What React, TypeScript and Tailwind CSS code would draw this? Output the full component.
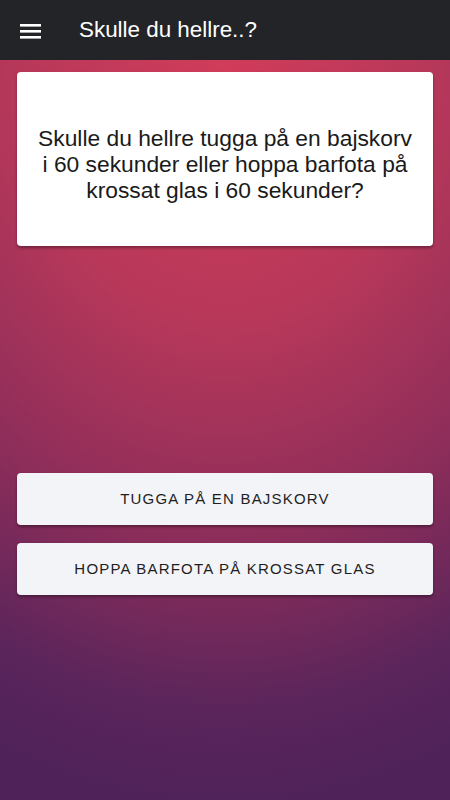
const choices = ["Tugga på en bajskorv", "Hoppa barfota på krossat glas"];

function MenuIcon() {
  return (
    <svg width="21" height="15" viewBox="0 0 21 15" fill="#ffffff">
      <rect x="0" y="0" width="21" height="2.6" />
      <rect x="0" y="6" width="21" height="2.6" />
      <rect x="0" y="12" width="21" height="2.6" />
    </svg>
  );
}

export default function App() {
  return (
    <div className="flex h-[800px] w-[450px] flex-col overflow-hidden font-['Liberation_Sans',Arial,sans-serif]">
      {/* Top bar */}
      <header className="flex h-[60px] shrink-0 items-center bg-[#232428] shadow-[0_1px_2px_rgba(0,0,0,0.4)]">
        <button className="ml-5 flex items-center pt-[2px]">
          <MenuIcon />
        </button>
        <h1 className="ml-[38px] text-[22.4px] text-white">Skulle du hellre..?</h1>
      </header>

      {/* Content */}
      <main className="flex flex-1 flex-col bg-[radial-gradient(ellipse_130%_100%_at_50%_0%,#d13c5a_0%,#b8385a_35%,#8c2d5a_65%,#5a255b_88%,#50225a_100%)] px-[17px] pt-3">
        <div className="flex h-[174px] items-center justify-center rounded bg-white px-[17px] pt-[10px] shadow-[0_2px_3px_rgba(0,0,0,0.35)]">
          <p className="text-center text-[22.8px] leading-[26px] text-[#1a1a1a]">
            Skulle du hellre tugga på en bajskorv i 60 sekunder eller hoppa barfota på krossat glas i 60 sekunder?
          </p>
        </div>

        <div className="mt-[227px] flex flex-col gap-[18px]">
          {choices.map((c) => (
            <button
              key={c}
              className="h-[52px] rounded bg-[#f3f4f8] text-[15px] uppercase tracking-[1.2px] text-[#1e1e1e] shadow-[0_2px_3px_rgba(0,0,0,0.35)]"
            >
              {c}
            </button>
          ))}
        </div>
      </main>
    </div>
  );
}
